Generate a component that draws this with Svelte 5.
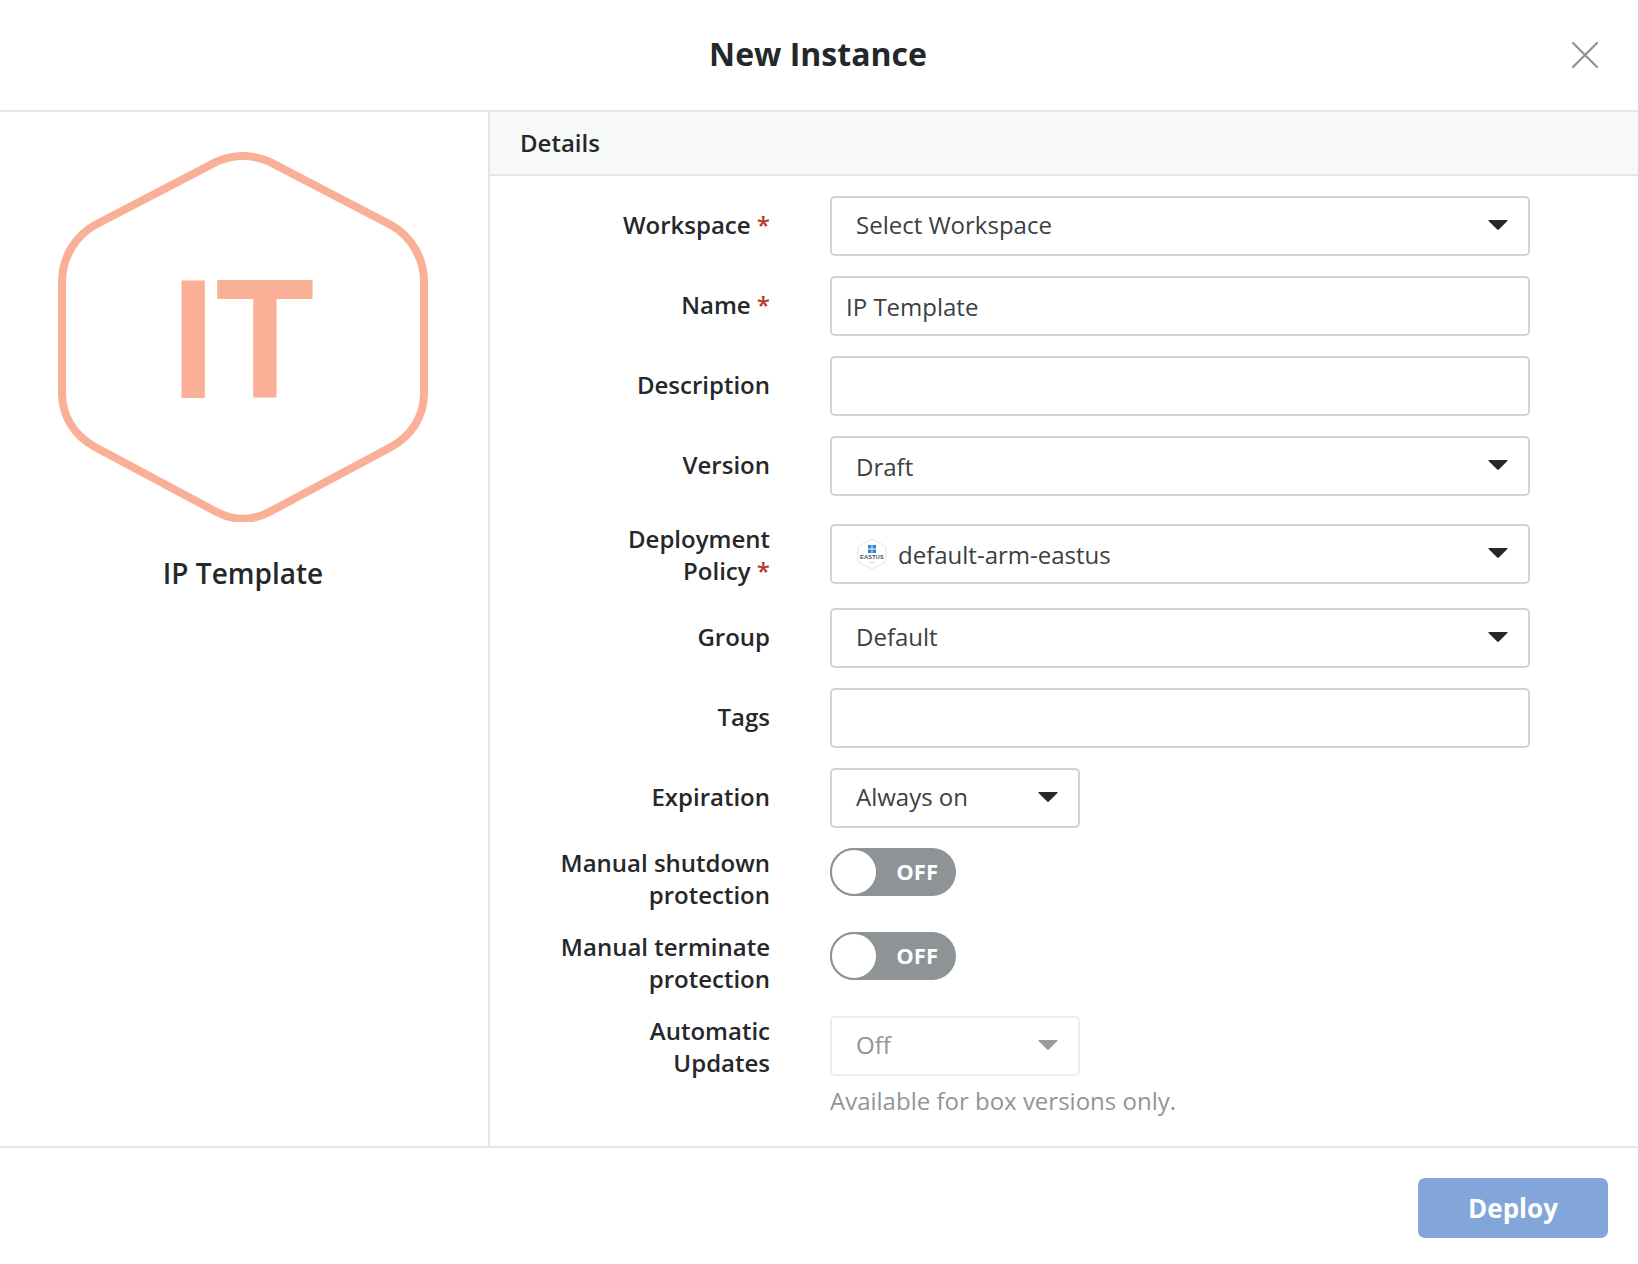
<script>
  const caret = "M1 1 H19 Q20 1 19.4 2 L10.8 10.6 Q10 11.4 9.2 10.6 L0.6 2 Q0 1 1 1 Z";
</script>

<div class="modal">
  <header class="top">
    <h1>New Instance</h1>
    <button class="close" aria-label="Close">
      <svg width="28" height="28" viewBox="0 0 28 28"><path d="M2 2 L26 26 M26 2 L2 26" stroke="#8d9296" stroke-width="2.2" stroke-linecap="round" /></svg>
    </button>
  </header>

  <div class="body">
    <aside class="side">
      <svg class="hex" width="370" height="370" viewBox="0 0 370 370">
        <path d="M158.7 9.7 Q185 -1.7 211.3 9.7 L333 73 C353 84 366 106 366 130 L366 241 C366 265 353 284 333 295 L211.3 360 Q185 373.7 158.7 360 L37 295 C17 284 4 265 4 241 L4 130 C4 106 17 84 37 73 Z" fill="none" stroke="#f9b097" stroke-width="8" />
        <text transform="translate(184.5 246) scale(0.945 1)" text-anchor="middle" class="hex-text">IT</text>
      </svg>
      <div class="side-name">IP Template</div>
    </aside>

    <main class="details">
      <div class="bar"><span>Details</span></div>
      <div class="form">
        <div class="row">
          <div class="label">Workspace <span class="req">*</span></div>
          <div class="select wide"><span class="val">Select Workspace</span>{@render arrow()}</div>
        </div>
        <div class="row">
          <div class="label">Name <span class="req">*</span></div>
          <input class="input" value="IP Template" />
        </div>
        <div class="row">
          <div class="label">Description</div>
          <input class="input" />
        </div>
        <div class="row before-tall">
          <div class="label">Version</div>
          <div class="select wide"><span>Draft</span>{@render arrow()}</div>
        </div>
        <div class="row top-align">
          <div class="label">Deployment<br />Policy <span class="req">*</span></div>
          <div class="select wide">
            <span class="policy">
              <svg width="32" height="32" viewBox="0 0 32 32">
                <path d="M16 1 L29 8 Q30 8.6 30 10 V22 Q30 23.4 29 24 L16 31 L3 24 Q2 23.4 2 22 V10 Q2 8.6 3 8 Z" fill="#fff" stroke="#e2e4e6" />
                <path d="M12 7 h3.6 v3.6 h-3.6 Z M16.4 7 h3.6 v3.6 h-3.6 Z M12 11.4 h3.6 v3.6 h-3.6 Z M16.4 11.4 h3.6 v3.6 h-3.6 Z" fill="#2f86d6" />
                <text x="16" y="21" text-anchor="middle" class="region">EASTUS</text>
                <path d="M13.5 24.5 H18.5" stroke="#c9cdd1" stroke-width="0.8" />
              </svg>
              default-arm-eastus
            </span>
            {@render arrow()}
          </div>
        </div>
        <div class="row">
          <div class="label">Group</div>
          <div class="select wide"><span class="val">Default</span>{@render arrow()}</div>
        </div>
        <div class="row">
          <div class="label">Tags</div>
          <input class="input" />
        </div>
        <div class="row">
          <div class="label">Expiration</div>
          <div class="select short"><span class="val">Always on</span>{@render arrow()}</div>
        </div>
        <div class="row top-align">
          <div class="label">Manual shutdown protection</div>
          <div class="toggle"><span class="knob"></span><span class="off">OFF</span></div>
        </div>
        <div class="row top-align">
          <div class="label">Manual terminate protection</div>
          <div class="toggle"><span class="knob"></span><span class="off">OFF</span></div>
        </div>
        <div class="row top-align last">
          <div class="label">Automatic Updates</div>
          <div>
            <div class="select short disabled"><span class="val">Off</span>{@render arrow("#999b9d")}</div>
            <div class="hint">Available for box versions only.</div>
          </div>
        </div>
      </div>
    </main>
  </div>

  <footer class="foot">
    <button class="deploy">Deploy</button>
  </footer>
</div>

{#snippet arrow(color = "#25282b")}
  <svg class="caret" width="20" height="12" viewBox="0 0 20 12"><path d={caret} fill={color} /></svg>
{/snippet}

<style>
  :global(body) {
    margin: 0;
    background: #fff;
  }
  .modal {
    height: 1264px;
    display: flex;
    flex-direction: column;
    font-family: "Open Sans", sans-serif;
    font-size: 24px;
    color: #25282b;
  }
  .top {
    height: 110px;
    border-bottom: 2px solid #e3e5e6;
    display: flex;
    align-items: center;
    justify-content: center;
    position: relative;
  }
  h1 {
    margin: 0 2px 4px 0;
    font-size: 32px;
    font-weight: 700;
  }
  .close {
    position: absolute;
    right: 39px;
    top: 41px;
    padding: 0;
    border: 0;
    background: none;
    display: flex;
  }
  .body {
    flex: 1;
    display: flex;
    min-height: 0;
  }
  .side {
    width: 486px;
    padding: 40px 2px 0 0;
    border-right: 2px solid #e3e5e6;
    display: flex;
    flex-direction: column;
    align-items: center;
  }
  .hex {
    display: block;
  }
  .hex-text {
    font-family: "Liberation Sans", Arial, sans-serif;
    font-weight: 700;
    font-size: 171px;
    fill: #f9b097;
  }
  .region {
    font-family: "Liberation Sans", sans-serif;
    font-weight: 700;
    font-size: 5.5px;
    letter-spacing: 0.25px;
    fill: #3d4c5c;
  }
  .side-name {
    margin-top: 32px;
    font-size: 28px;
    font-weight: 600;
    line-height: 38px;
  }
  .details {
    flex: 1;
  }
  .bar {
    height: 62px;
    background: #f7f9f8;
    border-bottom: 2px solid #e3e5e6;
    display: flex;
    align-items: center;
    padding-left: 30px;
    font-weight: 600;
  }
  .bar span {
    margin-bottom: 2px;
  }
  .form {
    padding: 20px 0 0 60px;
  }
  .row {
    display: flex;
    align-items: center;
    gap: 60px;
    margin-bottom: 20px;
  }
  .row.before-tall {
    margin-bottom: 28px;
  }
  .row.top-align {
    align-items: flex-start;
  }
  .row.last {
    margin-bottom: 0;
  }
  .label {
    width: 220px;
    margin: -1px 0 1px;
    text-align: right;
    font-weight: 600;
    line-height: 32px;
  }
  .req {
    color: #b8362a;
  }
  .input,
  .select {
    box-sizing: border-box;
    height: 60px;
    border: 2px solid #cfd3d8;
    border-radius: 5px;
    background: #fff;
    font: inherit;
    color: #3c4043;
  }
  .input {
    width: 700px;
    padding: 0 14px;
    outline: none;
  }
  .select {
    display: flex;
    align-items: center;
    justify-content: space-between;
    padding: 0 20px 0 24px;
  }
  .val {
    margin-bottom: 4px;
  }
  .wide {
    width: 700px;
  }
  .short {
    width: 250px;
  }
  .policy {
    display: flex;
    align-items: center;
    gap: 10px;
  }
  .caret {
    display: block;
    margin-top: -2px;
  }
  .disabled {
    border-color: #ecedee;
    color: #919599;
  }
  .toggle {
    box-sizing: border-box;
    width: 126px;
    height: 48px;
    border-radius: 24px;
    background: #8e9396;
    color: #fff;
    font-size: 22px;
    font-weight: 700;
    display: flex;
    align-items: center;
    justify-content: flex-end;
    padding-right: 18px;
    position: relative;
  }
  .off {
    margin-bottom: 2px;
  }
  .knob {
    position: absolute;
    left: 0;
    top: 0;
    box-sizing: border-box;
    width: 48px;
    height: 48px;
    border-radius: 50%;
    background: #fff;
    border: 2px solid #8e9396;
  }
  .hint {
    margin-top: 8px;
    color: #919599;
    line-height: 34px;
  }
  .foot {
    height: 118px;
    border-top: 2px solid #e3e5e6;
    display: flex;
    justify-content: flex-end;
    align-items: flex-start;
    padding: 30px 30px 0 0;
    box-sizing: border-box;
  }
  .deploy {
    width: 190px;
    height: 60px;
    border: 0;
    border-radius: 7px;
    background: #82a5da;
    color: #fff;
    font: 700 26px "Open Sans", sans-serif;
  }
</style>
